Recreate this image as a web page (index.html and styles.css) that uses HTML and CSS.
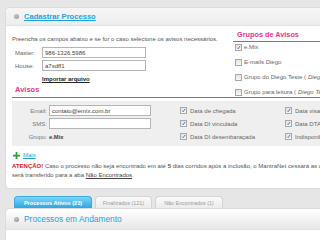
FILE: index.html
```html
<!DOCTYPE html>
<html lang="pt-BR">
<head>
<meta charset="utf-8">
<title>Cadastrar Processo</title>
<link rel="stylesheet" href="styles.css">
</head>
<body>
<div class="page">
  <section class="panel panel-top">
    <header class="phead">
      <span class="dot"></span>
      <a class="ptitle link" href="#">Cadastrar Processo</a>
    </header>
    <div class="pbody">
      <div class="toprow">
        <div class="leftcol">
          <p class="intro">Preencha os campos abaixo e se for o caso selecione os avisos necessários.</p>
          <div class="frow"><label class="flabel">Master:</label><input class="inp" value="986-1326.5986" readonly></div>
          <div class="frow"><label class="flabel">House:</label><input class="inp" value="a7sdff1" readonly></div>
          <a class="import" href="#">Importar arquivo</a>
          <h3 class="sec">Avisos</h3>
        </div>
        <div class="rightcol">
          <h3 class="sec grp">Grupos de Avisos</h3>
          <ul class="checks">
            <li><span class="cb on"><svg viewBox="0 0 7 7"><path d="M1.5 3.8 L3 5.3 L5.6 1.4" fill="none" stroke="#2a5fc0" stroke-width="1.1"/></svg></span>e.Mix</li>
            <li><span class="cb"></span>E-mails Diego</li>
            <li><span class="cb"></span>Grupo do Diego Teste (<i>Diego Teste</i>)</li>
            <li><span class="cb"></span>Grupo para leitura (<i>Diego Teste</i>)</li>
          </ul>
        </div>
      </div>
      <div class="graybox">
        <div class="formgrid">
          <label class="glabel">Email:</label><input class="inp ginp" value="contato@emix.com.br" readonly>
          <label class="glabel">SMS:</label><input class="inp ginp" value="" readonly>
          <label class="glabel">Grupo:</label><span class="gval">e.Mix</span>
        </div>
        <ul class="gchecks col1">
          <li><span class="cb on"><svg viewBox="0 0 7 7"><path d="M1.5 3.8 L3 5.3 L5.6 1.4" fill="none" stroke="#2a5fc0" stroke-width="1.1"/></svg></span>Data de chegada</li>
          <li><span class="cb on"><svg viewBox="0 0 7 7"><path d="M1.5 3.8 L3 5.3 L5.6 1.4" fill="none" stroke="#2a5fc0" stroke-width="1.1"/></svg></span>Data DI vinculada</li>
          <li><span class="cb on"><svg viewBox="0 0 7 7"><path d="M1.5 3.8 L3 5.3 L5.6 1.4" fill="none" stroke="#2a5fc0" stroke-width="1.1"/></svg></span>Data DI desembaraçada</li>
        </ul>
        <ul class="gchecks col2">
          <li><span class="cb on"><svg viewBox="0 0 7 7"><path d="M1.5 3.8 L3 5.3 L5.6 1.4" fill="none" stroke="#2a5fc0" stroke-width="1.1"/></svg></span>Data visada</li>
          <li><span class="cb on"><svg viewBox="0 0 7 7"><path d="M1.5 3.8 L3 5.3 L5.6 1.4" fill="none" stroke="#2a5fc0" stroke-width="1.1"/></svg></span>Data DTA</li>
          <li><span class="cb on"><svg viewBox="0 0 7 7"><path d="M1.5 3.8 L3 5.3 L5.6 1.4" fill="none" stroke="#2a5fc0" stroke-width="1.1"/></svg></span>Indisponibilidade</li>
        </ul>
      </div>
      <div class="mais">
        <svg class="plus" viewBox="0 0 8 8"><path d="M3 0h2v3h3v2H5v3H3V5H0V3h3z" fill="#2e9e2e"/></svg>
        <a class="link" href="#">Mais</a>
      </div>
      <p class="warn"><b class="atn">ATENÇÃO!</b> Caso o processo não seja encontrado em até <b>5</b> dias corridos após a inclusão, o MantraNet cessará as consultas e<br>será transferido para a aba <u>Não Encontrados</u>.</p>
    </div>
  </section>

  <nav class="tabs">
    <a class="tab active" href="#">Processos Ativos (23)</a>
    <a class="tab" href="#">Finalizados (121)</a>
    <a class="tab" href="#">Não Encontrados (1)</a>
  </nav>

  <section class="panel panel-bottom">
    <header class="phead phead2">
      <span class="dot"></span>
      <span class="ptitle ptitle2">Processos em Andamento</span>
    </header>
    <div class="pbody2"></div>
  </section>
</div>
</body>
</html>
```

FILE: styles.css
```css
* { box-sizing: border-box; }
html, body { margin: 0; padding: 0; }
body {
  background: #e6e6e6;
  overflow: hidden;
  width: 320px;
  height: 240px;
  font-family: "Liberation Sans", Arial, sans-serif;
  font-size: 6px;
  color: #555;
}
.page {
  width: 420px;
  padding: 7px 0 0 5px;
}
.panel {
  background: #fff;
  border: 1px solid #dcdcdc;
  border-right: none;
  border-radius: 5px 0 0 5px;
}
.phead {
  height: 18px;
  display: flex;
  align-items: center;
  gap: 5px;
  padding-left: 8px;
  background: linear-gradient(#f6f6f6, #ededed);
  border-bottom: 1px solid #e2e2e2;
  border-radius: 5px 0 0 0;
}
.dot {
  width: 5px;
  height: 5px;
  border-radius: 50%;
  background: radial-gradient(circle at 40% 35%, #c8c8c8, #8c8c8c);
}
.ptitle {
  font-size: 7.6px;
  font-weight: bold;
  color: #1ea3df;
}
.link { color: #1ea3df; text-decoration: underline; }
.pbody {
  padding: 4px 0 8px 6px;
}
.toprow {
  display: flex;
  border-bottom: 1px solid #ee3a95;
}
.leftcol {
  width: 221px;
  display: flex;
  flex-direction: column;
  align-items: flex-start;
}
.intro {
  margin: 5px 0 0 0;
  line-height: 8px;
  color: #555;
}
.frow {
  display: flex;
  align-items: center;
  margin-top: 4px;
  padding-left: 3px;
}
.frow + .frow { margin-top: 2px; }
.flabel {
  width: 27px;
  color: #666;
}
.inp {
  width: 104px;
  height: 11px;
  border: 1px solid #b5b5b5;
  background: #fff;
  font: inherit;
  font-size: 6px;
  color: #444;
  padding: 0 2px;
  margin: 0;
  outline: none;
}
.import {
  margin: 4px 0 0 30px;
  line-height: 8px;
  font-weight: bold;
  color: #222;
  text-decoration: underline;
}
.sec {
  margin: 2px 0 0 3px;
  line-height: 10px;
  font-size: 7.5px;
  font-weight: bold;
  color: #e8338f;
  padding-bottom: 0;
}
.rightcol {
  flex: 1;
}
.grp {
  margin: 0;
  padding: 0 0 1px 4px;
  border-bottom: 1px solid #ee3a95;
  font-size: 7.3px;
}
.checks {
  list-style: none;
  margin: 0;
  padding: 0 0 0 2px;
  display: flex;
  flex-direction: column;
  gap: 5px;
}
.checks li, .gchecks li {
  height: 10px;
  display: flex;
  align-items: center;
  gap: 2px;
  color: #666;
  white-space: nowrap;
}
.cb {
  width: 7px;
  height: 7px;
  border: 1px solid #a8a8a8;
  background: linear-gradient(#e4e4e4, #f8f8f8);
  display: inline-flex;
  flex-shrink: 0;
}
.cb svg { width: 100%; height: 100%; display: block; }
.gchecks li { gap: 3px; }
.graybox {
  margin-top: 3px;
  background: #efefef;
  padding: 4px 0 4px 0;
  display: flex;
}
.formgrid {
  display: grid;
  grid-template-columns: 35px 102px;
  grid-auto-rows: 11px;
  column-gap: 2px;
  row-gap: 2px;
  align-items: center;
}
.glabel {
  text-align: right;
  color: #777;
}
.ginp { width: 102px; }
.gval { color: #444; font-weight: bold; font-size: 5.8px; }
.gchecks {
  list-style: none;
  margin: 0;
  padding: 0;
  display: flex;
  flex-direction: column;
  gap: 2px;
}
.gchecks li { height: 11px; }
.col1 { margin-left: 29px; width: 105px; }
.mais {
  margin-top: 4px;
  height: 10px;
  display: flex;
  align-items: center;
  gap: 3px;
  padding-left: 1px;
}
.plus { width: 7px; height: 7px; }
.mais .link { font-size: 6px; }
.warn {
  margin: 2px 0 0 0;
  line-height: 9px;
  color: #555;
  white-space: nowrap;
}
.atn { color: #e0141e; }
.warn u { color: #444; }
.tabs {
  margin-top: 7px;
  padding-left: 9px;
  display: flex;
  gap: 3px;
  height: 12px;
  align-items: flex-end;
}
.tab {
  height: 12px;
  display: flex;
  align-items: center;
  justify-content: center;
  border: 1px solid #d4d4d4;
  border-bottom: none;
  border-radius: 4px 4px 0 0;
  background: linear-gradient(#fafafa, #ececec);
  color: #9a9a9a;
  text-decoration: none;
  font-size: 5.4px;
}
.tab:nth-child(2) { width: 57px; }
.tab:nth-child(3) { width: 68px; }
.tab.active {
  width: 78px;
  border-color: #39abe3;
  background: linear-gradient(#7fd4f7, #2ba6e2);
  color: #fff;
  font-weight: bold;
  font-size: 5.6px;
}
.panel-bottom {
  border-radius: 5px 0 0 0;
  height: 40px;
}
.phead2 {
  height: 21px;
  background: linear-gradient(#ffffff, #e7e7e7);
}
.ptitle2 {
  font-size: 8.4px;
  font-weight: normal;
  color: #1ea3df;
}
.pbody2 { height: 20px; background: #fff; }
```
